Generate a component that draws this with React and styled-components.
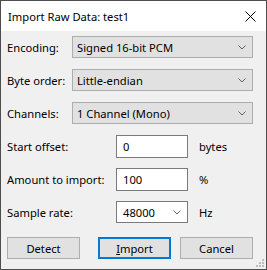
import React from 'react';
import styled, { createGlobalStyle } from 'styled-components';

const GlobalStyle = createGlobalStyle`
  html, body {
    margin: 0;
    padding: 0;
    background: #ffffff;
  }
  body {
    font-family: "Noto Sans", "Open Sans", sans-serif;
    font-size: 11.2px;
    color: #000;
  }
`;

const Window = styled.div`
  position: relative;
  width: 267px;
  height: 270px;
  box-sizing: border-box;
  border: 1px solid #4d4d4d;
  background: #f0f0f0;
  display: flex;
  flex-direction: column;
  overflow: hidden;
`;

const TitleBar = styled.div`
  height: 30px;
  background: #ffffff;
  display: flex;
  align-items: center;
  justify-content: space-between;
  padding: 0 10px 0 7px;
  flex-shrink: 0;
`;

const Title = styled.span`
  font-size: 11.2px;
  line-height: 1;
  margin-top: 1px;
`;

const CloseIcon = styled.svg`
  width: 11px;
  height: 11px;
  display: block;
`;

const Body = styled.div`
  flex: 1;
  display: flex;
  flex-direction: column;
  gap: 11px;
  padding: 5px 13px 0 6px;
`;

const Row = styled.div`
  display: grid;
  grid-template-columns: ${p => (p.$wide ? '109px 72px auto' : '65px 1fr')};
  align-items: center;
  height: 22px;
`;

const Label = styled.span`
  white-space: nowrap;
`;

const Unit = styled.span`
  padding-left: 11px;
`;

const Select = styled.div`
  height: 22px;
  box-sizing: border-box;
  border: 1px solid ${p => (p.$editable ? '#7a7a7a' : '#adadad')};
  background: ${p => (p.$editable ? '#ffffff' : '#e1e1e1')};
  display: flex;
  align-items: center;
  justify-content: space-between;
  padding: 0 6px 0 ${p => (p.$editable ? '6px' : '4px')};
`;

const Input = styled.div`
  height: 23px;
  box-sizing: border-box;
  border: 1px solid #7a7a7a;
  background: #ffffff;
  display: flex;
  align-items: center;
  padding: 0 6px;
`;

const Chevron = styled.svg`
  width: 8px;
  height: 5px;
  display: block;
`;

const ButtonBar = styled.div`
  display: flex;
  justify-content: space-between;
  margin-top: 3px;
`;

const ButtonGroup = styled.div`
  display: flex;
  gap: 9px;
`;

const Button = styled.div`
  width: 73px;
  height: 22px;
  box-sizing: border-box;
  border: ${p => (p.$primary ? '2px solid #0078d7' : '1px solid #adadad')};
  background: #e1e1e1;
  display: flex;
  align-items: center;
  justify-content: center;
`;

const Grip = styled.svg`
  position: absolute;
  right: 1px;
  bottom: 1px;
  width: 10px;
  height: 10px;
`;

const ChevronIcon = () => (
  <Chevron viewBox="0 0 8 5">
    <path d="M0.5 0.5 L4 4 L7.5 0.5" fill="none" stroke="#606060" strokeWidth="1" />
  </Chevron>
);

const Dropdown = ({ value, editable }) => (
  <Select $editable={editable}>
    <span>{value}</span>
    <ChevronIcon />
  </Select>
);

const gripDots = [
  [7, 1],
  [7, 4], [4, 4],
  [7, 7], [4, 7], [1, 7],
];

export default function App() {
  return (
    <>
      <GlobalStyle />
      <Window>
        <TitleBar>
          <Title>Import Raw Data: test1</Title>
          <CloseIcon viewBox="0 0 11 11">
            <path d="M0.5 0.5 L10.5 10.5 M10.5 0.5 L0.5 10.5" stroke="#000" strokeWidth="1" />
          </CloseIcon>
        </TitleBar>
        <Body>
          <Row>
            <Label>Encoding:</Label>
            <Dropdown value="Signed 16-bit PCM" />
          </Row>
          <Row>
            <Label>Byte order:</Label>
            <Dropdown value="Little-endian" />
          </Row>
          <Row>
            <Label>Channels:</Label>
            <Dropdown value="1 Channel (Mono)" />
          </Row>
          <Row $wide>
            <Label>Start offset:</Label>
            <Input>0</Input>
            <Unit>bytes</Unit>
          </Row>
          <Row $wide>
            <Label>Amount to import:</Label>
            <Input>100</Input>
            <Unit>%</Unit>
          </Row>
          <Row $wide>
            <Label>Sample rate:</Label>
            <Dropdown value="48000" editable />
            <Unit>Hz</Unit>
          </Row>
          <ButtonBar>
            <Button>Detect</Button>
            <ButtonGroup>
              <Button $primary><span><u>I</u>mport</span></Button>
              <Button>Cancel</Button>
            </ButtonGroup>
          </ButtonBar>
        </Body>
        <Grip viewBox="0 0 10 10">
          {gripDots.map(([x, y]) => (
            <rect key={`${x}-${y}`} x={x} y={y} width="2" height="2" fill="#bcbcbc" />
          ))}
        </Grip>
      </Window>
    </>
  );
}
